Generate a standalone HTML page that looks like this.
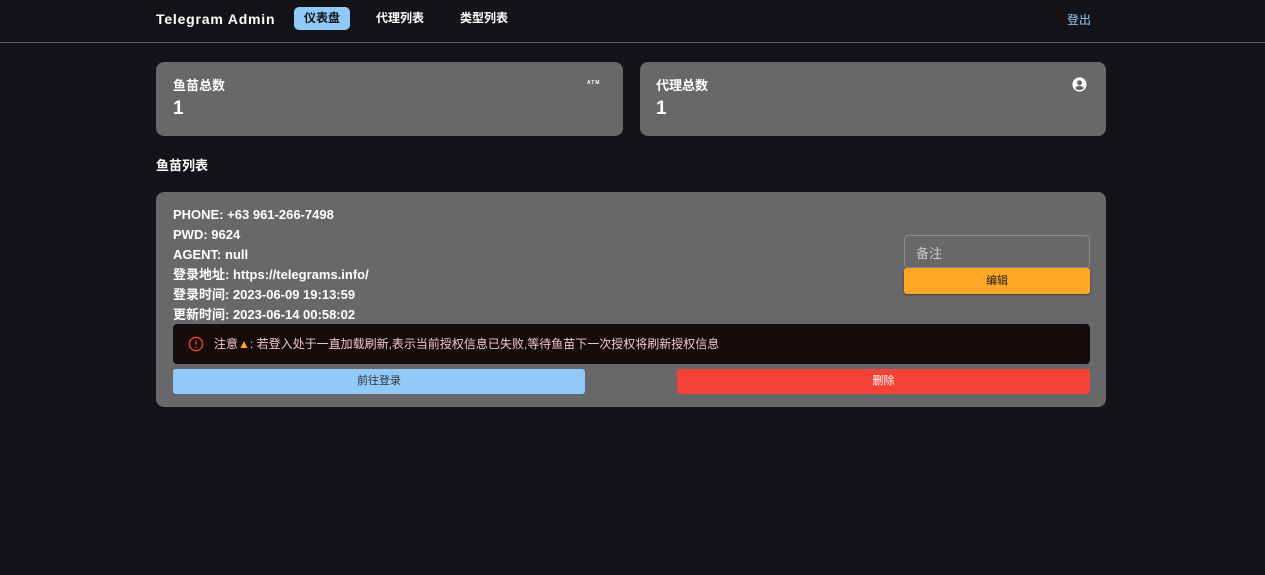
<!DOCTYPE html>
<html><head><meta charset="utf-8"><style>
*{box-sizing:border-box;margin:0;padding:0}
body{width:1265px;height:575px;background:#141318;font-family:"Liberation Sans","Noto Sans CJK SC",sans-serif;color:#fff;position:relative;overflow:hidden}
.nav{position:absolute;top:0;left:0;width:1265px;height:43px;border-bottom:1px solid #5a5a5e}
.brand{position:absolute;left:156px;top:11px;font-size:14px;font-weight:bold;letter-spacing:0.8px}
.tab{position:absolute;top:7px;height:23px;line-height:23px;font-size:12px;font-weight:bold;padding:0 10px;border-radius:5px}
.card{position:absolute;background:#68686a;border-radius:8px}
.t{position:absolute;font-weight:bold;font-size:13px}
.info{position:absolute;left:17px;top:13px;font-size:13px;font-weight:bold;line-height:20px}
</style></head><body>
<div class="nav">
<div class="brand">Telegram Admin</div>
<div class="tab" style="left:294px;background:#90caf9;color:#111">仪表盘</div>
<div class="tab" style="left:366px">代理列表</div>
<div class="tab" style="left:450px">类型列表</div>
<div style="position:absolute;left:1067px;top:11px;font-size:12px;color:#90caf9">登出</div>
</div>
<div class="card" style="left:156px;top:62px;width:467px;height:74px">
<div class="t" style="left:17px;top:13px">鱼苗总数</div>
<div class="t" style="left:17px;top:36px;font-size:19px">1</div>
<div style="position:absolute;left:431px;top:18px;font-size:5px;font-weight:bold;letter-spacing:1px">ATM</div>
</div>
<div class="card" style="left:640px;top:62px;width:466px;height:74px">
<div class="t" style="left:16px;top:13px">代理总数</div>
<div class="t" style="left:16px;top:36px;font-size:19px">1</div>
<svg style="position:absolute;left:431px;top:14px" width="17" height="17" viewBox="0 0 24 24"><path fill="#fff" d="M12 2a10 10 0 100 20 10 10 0 000-20zm0 4a3.5 3.5 0 110 7 3.5 3.5 0 010-7zm0 14a8 8 0 01-6-2.8c.5-2 4-3.2 6-3.2s5.5 1.2 6 3.2A8 8 0 0112 20z"/></svg>
</div>
<div class="t" style="left:156px;top:155px">鱼苗列表</div>
<div class="card" style="left:156px;top:192px;width:950px;height:215px">
<div class="info">PHONE: +63 961-266-7498<br>PWD: 9624<br>AGENT: null<br>登录地址: https://telegrams.info/<br>登录时间: 2023-06-09 19:13:59<br>更新时间: 2023-06-14 00:58:02</div>
<div style="position:absolute;left:748px;top:43px;width:186px;height:33px;border:1px solid #8a8a8c;border-radius:4px;font-size:13px;color:#c8c8c8;padding:7px 11px">备注</div>
<div style="position:absolute;left:748px;top:76px;width:186px;height:26px;background:#ffa726;border-radius:3px;color:#222;font-size:11px;text-align:center;line-height:26px;box-shadow:0 1px 2px rgba(0,0,0,.4)">编辑</div>
<div style="position:absolute;left:17px;top:132px;width:917px;height:40px;background:#160c0c;border-radius:4px;font-size:12px;color:#f2c8c8;line-height:40px;padding-left:41px">
<svg style="position:absolute;left:15px;top:12px" width="16" height="16" viewBox="0 0 24 24"><circle cx="12" cy="12" r="10" fill="none" stroke="#f44336" stroke-width="2"/><path d="M12 7v6M12 16v2" stroke="#f44336" stroke-width="2"/></svg>
注意<span style="color:#ffa726">▲</span>: 若登入处于一直加载刷新,表示当前授权信息已失败,等待鱼苗下一次授权将刷新授权信息</div>
<div style="position:absolute;left:17px;top:177px;width:412px;height:25px;background:#90caf9;border-radius:3px;color:#333;font-size:11px;text-align:center;line-height:25px">前往登录</div>
<div style="position:absolute;left:521px;top:177px;width:413px;height:25px;background:#f44336;border-radius:3px;color:#fff;font-size:11px;text-align:center;line-height:25px">删除</div>
</div>
</body></html>
